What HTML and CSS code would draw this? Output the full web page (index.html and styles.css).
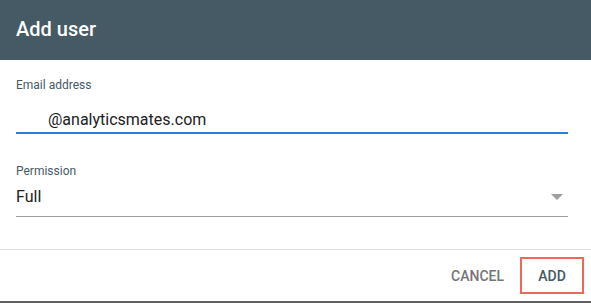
FILE: index.html
```html
<!DOCTYPE html>
<html>
<head>
<meta charset="utf-8">
<link rel="stylesheet" href="styles.css">
</head>
<body>
<div class="dialog">
  <div class="header">Add user</div>
  <div class="content">
    <div class="field email">
      <div class="label">Email address</div>
      <div class="input">@analyticsmates.com</div>
    </div>
    <div class="field perm">
      <div class="label">Permission</div>
      <div class="select">
        <span>Full</span>
        <svg class="arrow" width="12" height="6" viewBox="0 0 12 6"><path d="M0 0H12L6 6Z" fill="#9e9e9e"/></svg>
      </div>
    </div>
  </div>
  <div class="actions">
    <button class="btn cancel">CANCEL</button>
    <button class="btn add">ADD</button>
  </div>
</div>
</body>
</html>
```

FILE: styles.css
```css
html, body {
  margin: 0;
  padding: 0;
  background: #ffffff;
}
body {
  font-family: Roboto, "Liberation Sans", sans-serif;
  width: 591px;
  height: 303px;
  overflow: hidden;
}
.dialog {
  display: flex;
  flex-direction: column;
  height: 303px;
  box-sizing: border-box;
  border-bottom: 2px solid #616161;
}
.header {
  height: 60px;
  background: #455a64;
  color: #ffffff;
  font-size: 20px;
  font-weight: 500;
  padding-left: 16px;
  display: flex;
  align-items: center;
  box-sizing: border-box;
  padding-bottom: 3px;
}
.content {
  padding: 0 23px 0 16px;
  border-bottom: 1px solid #e0e0e0;
  padding-bottom: 32px;
}
.label {
  font-size: 12px;
  line-height: 14px;
  color: #455a64;
}
.email {
  padding-top: 18px;
}
.input {
  margin-top: 18px;
  font-size: 16px;
  line-height: 19px;
  color: #212121;
  padding-left: 32px;
  padding-bottom: 3px;
  border-bottom: 2px solid #2a7de1;
}
.perm {
  padding-top: 30px;
}
.select {
  margin-top: 9px;
  display: flex;
  justify-content: space-between;
  align-items: center;
  font-size: 16px;
  line-height: 19px;
  color: #212121;
  padding-bottom: 10px;
  border-bottom: 1px solid #9e9e9e;
}
.arrow {
  margin-right: 5px;
  margin-top: 1px;
}
.actions {
  flex: 1;
  display: flex;
  justify-content: flex-end;
  align-items: center;
  padding-right: 7px;
}
.btn {
  font-family: Roboto, "Liberation Sans", sans-serif;
  font-size: 14px;
  font-weight: 500;
  background: none;
  border: none;
  padding: 0;
  cursor: pointer;
}
.cancel {
  color: #757575;
  margin-right: 16px;
  margin-top: 1px;
}
.add {
  color: #455a64;
  width: 64px;
  height: 37px;
  box-sizing: border-box;
  border: 2px solid #f0675a;
  padding-top: 1px;
}
```
